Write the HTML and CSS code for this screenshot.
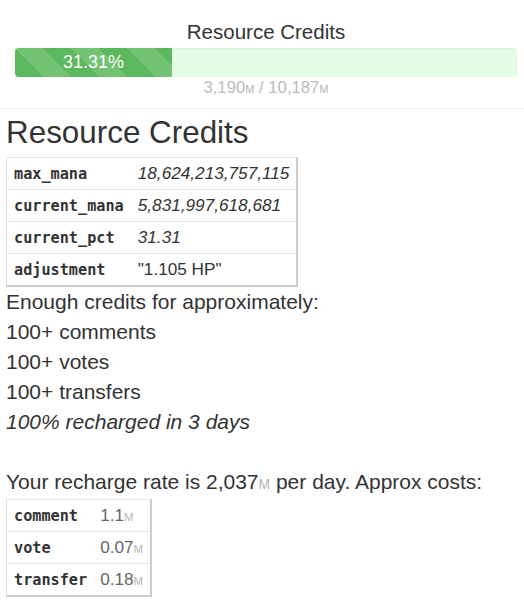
FILE: index.html
```html
<!DOCTYPE html>
<html lang="en">
<head>
    <meta charset="UTF-8">
    <meta name="viewport" content="width=device-width, initial-scale=1.0">
    <title>Resource Credits</title>
    <link rel="stylesheet" href="styles.css">
</head>
<body>
    <div class="rc-header">
        <div class="rc-title">Resource Credits</div>
        <div class="progress">
            <div class="progress-bar" style="width: 31.31%">31.31%</div>
        </div>
        <div class="rc-amount">3,190<span class="unit">M</span> / 10,187<span class="unit">M</span></div>
    </div>

    <div class="content">
        <h1>Resource Credits</h1>
        <table class="props">
            <tr><td class="key">max_mana</td><td class="val">18,624,213,757,115</td></tr>
            <tr><td class="key">current_mana</td><td class="val">5,831,997,618,681</td></tr>
            <tr><td class="key">current_pct</td><td class="val">31.31</td></tr>
            <tr><td class="key">adjustment</td><td class="str">"1.105 HP"</td></tr>
        </table>
        <div class="summary">
            Enough credits for approximately:<br>
            100+ comments<br>
            100+ votes<br>
            100+ transfers<br>
            <em>100% recharged in 3 days</em><br>
            <br>
            Your recharge rate is 2,037<span class="unit">M</span> per day. Approx costs:
        </div>
        <table class="props costs">
            <tr><td class="key">comment</td><td class="cost">1.1<span class="unit">M</span></td></tr>
            <tr><td class="key">vote</td><td class="cost">0.07<span class="unit">M</span></td></tr>
            <tr><td class="key">transfer</td><td class="cost">0.18<span class="unit">M</span></td></tr>
        </table>
    </div>
</body>
</html>
```

FILE: styles.css
```css
body {
  margin: 0;
  font-family: 'Liberation Sans', Arial, sans-serif;
  color: #333;
  background-color: #fff;
}

.unit {
  font-size: 0.66em;
  color: #b5b5b5;
}

/* top panel with the bar */
.rc-header {
  padding: 18px 7px 8px 15px;
  border-bottom: 1px solid #eee;
  text-align: center;
}

.rc-title {
  font-size: 20.5px;
  line-height: 28px;
  margin-bottom: 2px;
}

.progress {
  height: 29px;
  background-color: #e4fce4;
  border-radius: 4px;
  overflow: hidden;
  box-shadow: inset 0 1px 2px rgba(0, 0, 0, 0.06);
}

.progress-bar {
  height: 100%;
  background-color: #5cb85c;
  background-image: linear-gradient(45deg,
    rgba(255, 255, 255, 0.15) 25%, transparent 25%,
    transparent 50%, rgba(255, 255, 255, 0.15) 50%,
    rgba(255, 255, 255, 0.15) 75%, transparent 75%, transparent);
  background-size: 56px 56px;
  color: #fff;
  font-size: 18px;
  line-height: 29px;
  text-align: center;
}

.rc-amount {
  font-size: 16.7px;
  line-height: 22px;
  color: #bbb;
}

/* main block */
.content {
  padding: 0 6px;
}

h1 {
  margin: 0;
  font-size: 31.4px;
  font-weight: normal;
  line-height: 48px;
}

.props {
  border-collapse: collapse;
  border: 1px solid #ddd;
  border-right: 2px solid #ccc;
  border-bottom: 2px solid #ccc;
}

.props td {
  height: 31px;
  padding: 0 7px;
  border-top: 1px solid #e8e8e8;
  font-size: 17.2px;
}

.props .key {
  font-family: 'DejaVu Sans Mono', 'Liberation Mono', monospace;
  font-weight: bold;
  font-size: 15.2px;
  color: #333;
}

.props .val {
  font-style: italic;
}

.props .cost {
  color: #666;
  padding-left: 6px;
}

.summary {
  font-size: 21px;
  line-height: 30px;
}
```
